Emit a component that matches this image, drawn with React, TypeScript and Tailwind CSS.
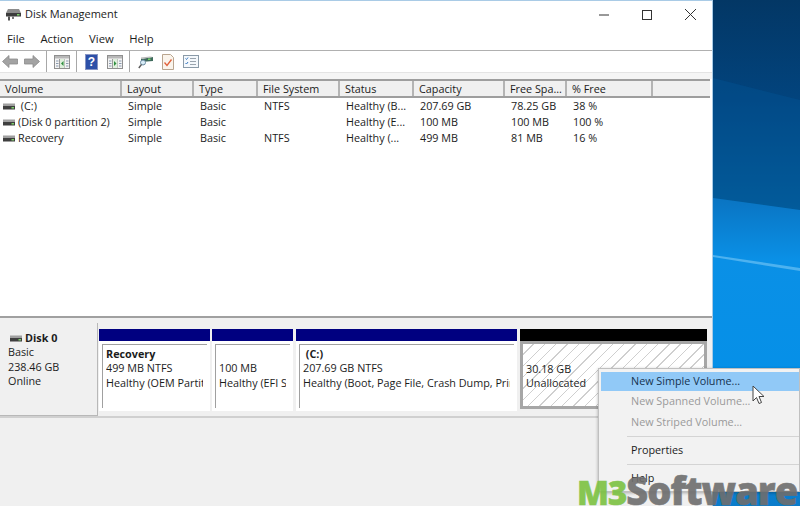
const columns = [
  { label: "Volume", width: "w-[122px]" },
  { label: "Layout", width: "w-[72px]" },
  { label: "Type", width: "w-[64px]" },
  { label: "File System", width: "w-[82px]" },
  { label: "Status", width: "w-[74px]" },
  { label: "Capacity", width: "w-[91px]" },
  { label: "Free Spa...", width: "w-[62px]" },
  { label: "% Free", width: "w-[86px]" },
];

const rows = [
  [" (C:)", "Simple", "Basic", "NTFS", "Healthy (B...", "207.69 GB", "78.25 GB", "38 %"],
  ["(Disk 0 partition 2)", "Simple", "Basic", "", "Healthy (E...", "100 MB", "100 MB", "100 %"],
  ["Recovery", "Simple", "Basic", "NTFS", "Healthy (...", "499 MB", "81 MB", "16 %"],
];

const DriveIcon = () => (
  <svg width="12" height="7" viewBox="0 0 12 7" className="shrink-0">
    <rect x="0" y="0.5" width="12" height="2.5" fill="#a0a0a0" />
    <rect x="0" y="3" width="12" height="3.5" fill="#3f3f3f" />
    <rect x="8.500" y="4" width="2.500" height="1.500" fill="#7ccf6a" />
  </svg>
);

const TitleIcon = () => (
  <svg width="17" height="14" viewBox="0 0 17 14">
    <path d="M3 1h11l2 4H1z" fill="#8c8c8c" />
    <rect x="1" y="5" width="15" height="3.5" fill="#3c3c3c" />
    <rect x="12" y="6" width="2.5" height="1.5" fill="#7ccf6a" />
    <rect x="3" y="8.5" width="2" height="4" fill="#555" />
    <rect x="7" y="8.5" width="2" height="2.5" fill="#777" />
  </svg>
);

const ArrowIcon = ({ flip }: { flip?: boolean }) => (
  <svg width="16" height="13" viewBox="0 0 16 13" className={flip ? "-scale-x-100" : ""}>
    <path d="M7 .5L.5 6.5 7 12.5V9h8.500V4H7z" fill="#a3a3a3" stroke="#8a8a8a" strokeWidth="0.8" />
  </svg>
);

const PaneIcon = ({ right }: { right?: boolean }) => (
  <svg width="16" height="14" viewBox="0 0 16 14">
    <rect x="0.5" y="0.5" width="15" height="13" fill="#f4f4f4" stroke="#8f8f8f" />
    <rect x="1" y="1" width="14" height="2.5" fill="#b8b8b8" />
    <path d="M5.5 4v9M10.5 4v9" stroke="#9c9c9c" />
    <rect x="6" y="4" width="4.5" height="9" fill="#dff0dd" />
    <path d={right ? "M7 6l2.5 2.5L7 11z" : "M9.5 6L7 8.5 9.5 11z"} fill="#2f8f3f" />
    <path d="M2 6h2.500M2 8.500h2.500M2 11h2.500M12 6h2.500M12 8.500h2.500M12 11h2.500" stroke="#8a9bb0" />
  </svg>
);

const HelpIcon = () => (
  <svg width="13" height="16" viewBox="0 0 13 16">
    <rect x="0.500" y="0.500" width="12" height="15" fill="#2d50a8" stroke="#8795c4" />
    <text x="6.500" y="12" textAnchor="middle" fontSize="12" fontWeight="700" fill="#fff" fontFamily="Liberation Sans, sans-serif">?</text>
  </svg>
);

const DriveSearchIcon = () => (
  <svg width="16" height="15" viewBox="0 0 16 15">
    <path d="M3 5L15 3v4L3 8z" fill="#3f6b5c" />
    <path d="M3 3.500L12 2.500l3 .5-12 2z" fill="#b9b9b9" />
    <rect x="10" y="4.500" width="2.500" height="1.500" fill="#76d06a" />
    <circle cx="5" cy="8.500" r="2.500" fill="#d8ecf7" stroke="#6a8aa0" />
    <path d="M3.500 10.500L.8 14" stroke="#5a5a5a" strokeWidth="1.400" />
  </svg>
);

const DocCheckIcon = () => (
  <svg width="12" height="16" viewBox="0 0 12 16">
    <path d="M.5.500h8l3 3v12H.5z" fill="#faf4ec" stroke="#b9a58f" />
    <path d="M2.500 8.500l2.500 3 4.500-6" fill="none" stroke="#e0603a" strokeWidth="1.300" />
  </svg>
);

const ChecklistIcon = () => (
  <svg width="16" height="13" viewBox="0 0 16 13">
    <rect x="0.500" y="0.500" width="15" height="12" fill="#f4f8fc" stroke="#8a9aa8" />
    <path d="M2.500 3.500l1 1 1.500-2M2.500 8l1 1 1.500-2" fill="none" stroke="#3a78c0" />
    <path d="M7 3.500h6M7 6.500h6M7 9.500h6" stroke="#9aa4ae" />
  </svg>
);

const ToolbarDivider = () => <div className="h-[21px] w-px bg-[#a8a8a8]" />;

function Partition({ width, name, size, status }: { width: string; name: string; size: string; status: string }) {
  return (
    <div className={`${width} flex h-[82px] shrink-0 flex-col bg-white`}>
      <div className="h-[12px] shrink-0 bg-[#000080]" />
      <div className="mx-[3px] mb-[3px] mt-[3px] flex-1 border-l border-t border-[#a0a0a0] pl-[3px] pt-[2px] leading-[14.400px]">
        <div className="mr-[4px] overflow-hidden whitespace-pre">
          <div className="h-[14.400px] font-bold">{name}</div>
          <div>{size}</div>
          <div>{status}</div>
        </div>
      </div>
    </div>
  );
}

export default function App() {
  return (
    <div className="relative flex h-[506px] w-[800px] overflow-hidden font-['Open_Sans',sans-serif] text-[10.800px] text-[#1c1c1c]">
      {/* Window */}
      <div className="flex h-full w-[713px] shrink-0 flex-col border-r border-t border-[#a9cbe6] bg-white">
        <div className="flex h-[29px] shrink-0 items-center pb-[2px] pl-[5px]">
          <TitleIcon />
          <span className="ml-[3px] text-[11px]">Disk Management</span>
          <div className="ml-auto flex items-center gap-[33px] pr-[16px]">
            <svg width="10" height="10" viewBox="0 0 10 10"><path d="M0 5h10" stroke="#333" /></svg>
            <svg width="10" height="10" viewBox="0 0 10 10"><rect x="0.500" y="0.500" width="9" height="9" fill="none" stroke="#333" /></svg>
            <svg width="11" height="11" viewBox="0 0 11 11"><path d="M0 0l11 11M11 0L0 11" stroke="#333" /></svg>
          </div>
        </div>

        <div className="flex h-[21px] shrink-0 items-center gap-[15.500px] border-b border-[#b0b0b0] pb-[2px] pl-[7px] text-[11.300px]">
          <span>File</span>
          <span>Action</span>
          <span>View</span>
          <span>Help</span>
        </div>

        <div className="flex h-[21px] shrink-0 items-center pl-[2px]">
          <ArrowIcon />
          <div className="ml-[6px]"><ArrowIcon flip /></div>
          <div className="ml-[6px]"><ToolbarDivider /></div>
          <div className="ml-[7px]"><PaneIcon /></div>
          <div className="ml-[6px]"><ToolbarDivider /></div>
          <div className="ml-[8px]"><HelpIcon /></div>
          <div className="ml-[9px]"><PaneIcon right /></div>
          <div className="ml-[6px]"><ToolbarDivider /></div>
          <div className="ml-[8px]"><DriveSearchIcon /></div>
          <div className="ml-[8px]"><DocCheckIcon /></div>
          <div className="ml-[9px]"><ChecklistIcon /></div>
        </div>

        <div className="h-[7px] shrink-0 border-t border-[#e4e4e4] bg-[#f5f5f5]" />

        {/* Volume list */}
        <div className="h-[237px] shrink-0 pr-[2px]">
          <div className="flex h-[19px] items-center border-b-2 border-t-2 border-[#9e9e9e] bg-[#f0f0f0]">
            {columns.map((column) => (
              <div key={column.label} className={`${column.width} flex h-full shrink-0 items-center overflow-hidden whitespace-nowrap border-r-2 border-[#b4b4b4] pl-[5px] pt-[1px]`}>
                {column.label}
              </div>
            ))}
          </div>
          {rows.map((row) => (
            <div key={row[0]} className="flex h-[16px] items-center">
              {row.map((cell, i) => (
                <div key={i} className={`${columns[i].width} flex shrink-0 items-center gap-[3px] overflow-hidden whitespace-pre pl-[6px] first:pl-[3px]`}>
                  {i === 0 && <DriveIcon />}
                  {cell}
                </div>
              ))}
            </div>
          ))}
        </div>

        {/* Graphical view */}
        <div className="min-h-0 flex-1 border-t-2 border-[#a0a0a0] bg-[#f0f0f0] pt-[5px]">
          <div className="flex items-start border-b-2 border-[#d0d0d0] pr-[5px]">
            <div className="h-[93px] w-[98px] shrink-0 border-b border-r border-[#b8b8b8] bg-[#f0f0f0] pl-[8px] pt-[8px] leading-[14.400px]">
              <div className="flex items-center gap-[3px] pl-[2px] font-bold"><DriveIcon />Disk 0</div>
              <div>Basic</div>
              <div>238.46 GB</div>
              <div>Online</div>
            </div>
            <div className="ml-px mt-[6px] flex gap-[2px]">
              <Partition width="w-[111px]" name="Recovery" size="499 MB NTFS" status="Healthy (OEM Partition)" />
              <Partition width="w-[81px]" name="" size="100 MB" status="Healthy (EFI System Partition)" />
              <Partition width="ml-px w-[221px]" name=" (C:)" size="207.69 GB NTFS" status="Healthy (Boot, Page File, Crash Dump, Primary Partition)" />
              <div className="ml-px flex h-[80px] w-[187px] shrink-0 flex-col">
                <div className="h-[12px] shrink-0 bg-black" />
                <div className="flex-1 border-[3px] border-[#a6a6a6] bg-[repeating-linear-gradient(135deg,#ffffff_0,#ffffff_7px,#cfcfcf_7px,#cfcfcf_8px)] pl-[3px] pt-[18px] leading-[14.400px]">
                  <div>30.18 GB</div>
                  <div>Unallocated</div>
                </div>
              </div>
            </div>
          </div>
        </div>
      </div>

      {/* Desktop wallpaper */}
      <svg className="h-full flex-1" viewBox="0 0 87 506" preserveAspectRatio="none">
        <defs>
          <linearGradient id="sky" x1="0" y1="0" x2="0" y2="1">
            <stop offset="0" stopColor="#033765" />
            <stop offset="0.2" stopColor="#02447e" />
            <stop offset="0.42" stopColor="#02609f" />
          </linearGradient>
          <linearGradient id="low" x1="0" y1="0" x2="0" y2="1">
            <stop offset="0" stopColor="#0a74c2" />
            <stop offset="0.2" stopColor="#0a90e6" />
            <stop offset="0.6" stopColor="#0590e8" />
            <stop offset="1" stopColor="#0a7ccb" />
          </linearGradient>
        </defs>
        <rect width="87" height="506" fill="url(#sky)" />
        <path d="M0 78L87 100V210L0 198z" fill="#025595" opacity="0.4" />
        <path d="M0 198L87 210V506H0z" fill="url(#low)" />
        <path d="M0 255L87 268V271L0 257z" fill="#8fd4fa" opacity="0.5" />
      </svg>

      {/* Context menu */}
      <div className="absolute left-[598px] top-[368px] h-[124px] w-[202px] border border-[#c0c0c0] bg-[#f2f2f2] pt-[3px] text-[#1c1c1c] shadow-[0_1px_3px_rgba(0,0,0,0.3)]">
        <div className="ml-[2px] flex h-[19px] items-center bg-[#91c9f7] pl-[30px] text-[#16324f]">New Simple Volume...</div>
        <div className="flex h-[21px] items-center pl-[32px] text-[#9a9a9a]">New Spanned Volume...</div>
        <div className="flex h-[21px] items-center pl-[32px] text-[#9a9a9a]">New Striped Volume...</div>
        <div className="ml-[28px] mt-[3px] h-px bg-[#d4d4d4]" />
        <div className="mt-[3px] flex h-[21px] items-center pl-[32px]">Properties</div>
        <div className="ml-[28px] mt-[3px] h-px bg-[#d4d4d4]" />
        <div className="mt-[3px] flex h-[21px] items-center pl-[32px]">Help</div>
      </div>

      {/* Mouse cursor */}
      <svg className="absolute left-[752px] top-[385px]" width="14" height="20" viewBox="0 0 14 20">
        <path d="M1 1v15l3.500-3.500 2.500 6 2.500-1-2.500-6h5z" fill="#fff" stroke="#444" strokeWidth="1" />
      </svg>

      {/* Watermark */}
      <div className="absolute left-[577px] top-[466px] whitespace-nowrap font-['Open_Sans',sans-serif] text-[38px] font-extrabold leading-[48px] opacity-90">
        <span className="text-[33px] tracking-[-1px] text-[#7cc242] [-webkit-text-stroke:0.6px]">M3</span>
        <span className="tracking-[-1px] text-[#6e6e6e] [-webkit-text-stroke:0.6px]">Software</span>
      </div>
    </div>
  );
}
